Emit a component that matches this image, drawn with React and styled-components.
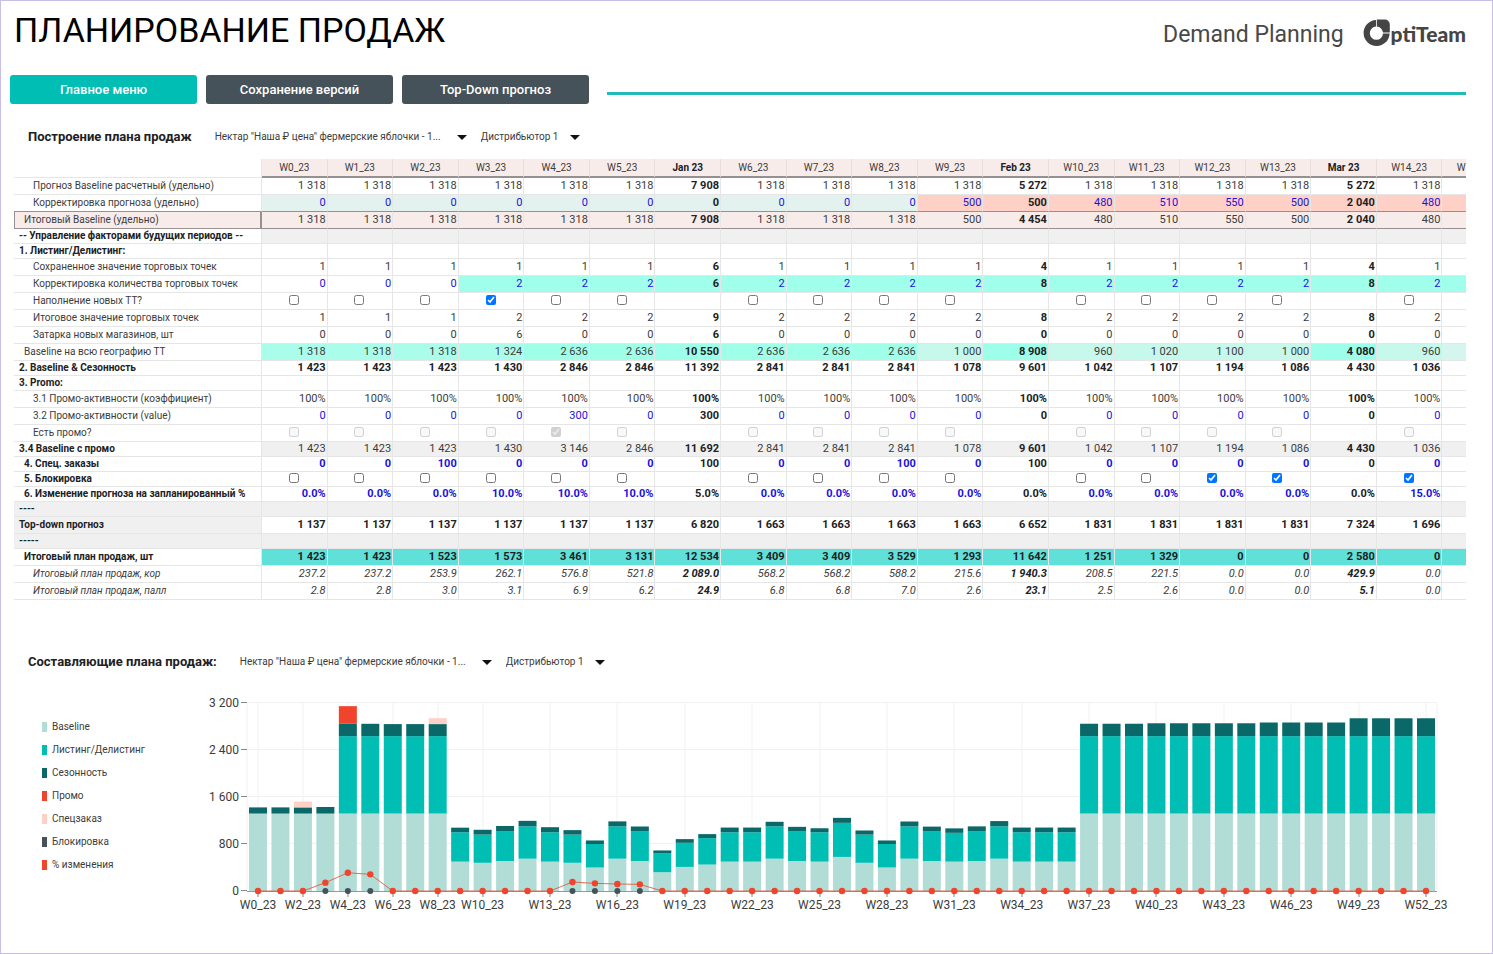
import React from "react";
import styled, { createGlobalStyle, css } from "styled-components";

const color = {
  teal: "#00beb4",
  slate: "#455259",
  ink: "#202124",
  text: "#3c3c3c",
  blue: "#1a12dc",
  line: "#e6e6e6",
  strong: "#969090",
  pink: "#f8eceb",
  grey: "#f0f0f0",
  mint: "#a0ffea",
  salmon: "#ffd0c6",
  red: "#f0442c",
  pale: "#b2dcd6",
  deep: "#0a6868",
};

const GlobalStyle = createGlobalStyle`
  *, *::before, *::after { box-sizing: border-box; }
  body {
    margin: 0;
    background: #fff;
    color: ${color.text};
    font-family: Roboto, "Liberation Sans", sans-serif;
  }
`;

const Page = styled.main`
  min-height: 100vh;
  padding: 0 26px 24px 9px;
  border: 1px solid #c8bfe8;
`;

const Header = styled.header`
  display: flex;
  align-items: baseline;
  gap: 19px;
  height: 74px;
  padding: 9px 0 0 4px;
`;

const Title = styled.h1`
  flex: 1;
  margin: 0;
  font-size: 34px;
  font-weight: 400;
  line-height: 40px;
  color: #000;
`;

const Product = styled.span`
  font-size: 23px;
  line-height: 32px;
  color: #484848;
`;

const Brand = styled.div`
  display: flex;
  align-items: baseline;
  color: #454545;
`;

const BrandName = styled.span`
  font-family: Lato, "Open Sans", sans-serif;
  font-size: 21px;
  font-weight: 900;
  line-height: 30px;
`;

const BrandMark = styled.svg`
  align-self: flex-start;
  flex: none;
`;

const Nav = styled.nav`
  display: flex;
  align-items: center;
  gap: 9px;
`;

const NavButton = styled.button`
  width: 187px;
  height: 29px;
  padding: 0;
  border: 0;
  border-radius: 3px;
  background: ${(p) => (p.$active ? color.teal : color.slate)};
  color: #fff;
  font: 500 13px/28px Roboto, sans-serif;
`;

const NavRule = styled.hr`
  flex: 1;
  height: 3px;
  margin: 8px 0 0 9px;
  border: 0;
  background: #22b9bb;
`;

const SectionHead = styled.div`
  display: flex;
  align-items: center;
  gap: 23px;
  height: 24px;
  margin: ${(p) => p.$top}px 0 0 18px;
`;

const SectionTitle = styled.h2`
  margin: 0;
  font-size: 13px;
  font-weight: 700;
  line-height: 24px;
  color: ${color.ink};
`;

const Filters = styled.div`
  display: flex;
  gap: 14px;
`;

const SelectBox = styled.span`
  position: relative;
  display: inline-flex;
  align-items: center;
  width: ${(p) => p.$width}px;
`;

const Select = styled.select`
  appearance: none;
  width: 100%;
  margin: 0;
  padding: 0 19px 0 0;
  border: 0;
  background: none;
  color: ${color.text};
  font: 10px/24px Roboto, sans-serif;
`;

const Caret = styled.svg`
  position: absolute;
  right: 0;
  pointer-events: none;
`;

const TableScroll = styled.div`
  margin: 10px 0 0 4px;
  overflow: hidden;
`;

const Table = styled.table`
  width: calc(100% + 42px);
  table-layout: fixed;
  border-collapse: separate;
  border-spacing: 0;
  font-size: 11px;
`;

const LabelCol = styled.col`
  width: 248px;
`;

const cellBox = css`
  padding: 0;
  border: solid ${color.line};
  border-width: 0 1px 1px 0;
  white-space: nowrap;
  overflow: hidden;
`;

const ColumnHead = styled.th`
  ${cellBox}
  height: 19px;
  line-height: 17px;
  font-size: 10px;
  background: ${color.pink};
  border-right-color: #e9dedd;
  border-bottom: 2px solid ${color.strong};
  font-weight: ${(p) => (p.$month ? 700 : 400)};
  color: ${(p) => (p.$month ? color.ink : color.text)};
`;

const CornerCell = styled.td`
  ${cellBox}
`;

const Row = styled.tr`
  height: ${(p) => (p.$short ? 15 : 17)}px;
  line-height: ${(p) => (p.$short ? 14 : 16)}px;
  font-style: ${(p) => (p.$italic ? "italic" : "normal")};
`;

const indents = [5, 10, 19];

const RowHead = styled.th`
  ${cellBox}
  padding-left: ${(p) => indents[p.$level]}px;
  font-size: 10px;
  background: ${(p) => p.$bg || "#fff"};
  text-align: left;
  font-weight: ${(p) => (p.$bold ? 700 : 400)};
  color: ${(p) => (p.$bold ? color.ink : color.text)};
  ${(p) =>
    p.$framed &&
    css`
      padding-left: 9px;
      border-color: ${color.strong};
      border-width: 0 2px 1px 1px;
    `}
  ${(p) => p.$edge && css`border-bottom-color: ${color.strong};`}
`;

const Cell = styled.td`
  ${cellBox}
  padding-right: 1px;
  text-align: ${(p) => (p.$center ? "center" : "right")};
  background: ${(p) => p.$bg || "#fff"};
  font-weight: ${(p) => (p.$bold ? 700 : 400)};
  color: ${(p) => (p.$blue ? color.blue : p.$bold ? color.ink : color.text)};
  ${(p) => p.$edge && css`border-bottom-color: ${color.strong};`}
`;

const Check = styled.input`
  display: block;
  width: 10px;
  height: 10px;
  margin: 0 auto 2px;
`;

const ChartArea = styled.div`
  display: flex;
  align-items: flex-start;
  margin-top: 19px;
`;

const Legend = styled.ul`
  flex: none;
  width: 195px;
  margin: 22px 0 0;
  padding: 0 0 0 32px;
  list-style: none;
`;

const LegendItem = styled.li`
  display: flex;
  align-items: center;
  gap: 5px;
  font-size: 10px;
  line-height: 23px;

  &::before {
    content: "";
    width: 5px;
    height: 10px;
    background: ${(p) => p.$color};
  }
`;

const Chart = styled.svg`
  flex: 1;
  min-width: 0;
  display: block;
  font-size: 12px;
  fill: ${color.text};
`;

const columns = [
  "W0_23", "W1_23", "W2_23", "W3_23", "W4_23", "W5_23", "Jan 23",
  "W6_23", "W7_23", "W8_23", "W9_23", "Feb 23",
  "W10_23", "W11_23", "W12_23", "W13_23", "Mar 23",
  "W14_23", "W15_23",
];
const isMonth = (i) => !columns[i].startsWith("W");

const format = (v) => String(v).replace(/\B(?=(\d{3})+(?!\d))/, "\u00a0");
const list = (text) => text.split(" ").map((v) => (v.includes(".") || v.includes("%") ? v : format(v)));

const baselineTint = (i) => {
  if (isMonth(i)) return "#9dffe9";
  if (i < 4) return "#abfdeb";
  if (i < 10) return "#a0ffe9";
  return i === 18 ? "#d4f6ee" : "#c6f8ec";
};

const rows = [
  { label: "Прогноз Baseline расчетный (удельно)", level: 2, values: list("1318 1318 1318 1318 1318 1318 7908 1318 1318 1318 1318 5272 1318 1318 1318 1318 5272 1318") },
  { label: "Корректировка прогноза (удельно)", level: 2, blue: true, edge: true, tint: (i) => (i < 10 ? "#e3f2ef" : color.salmon), values: list("0 0 0 0 0 0 0 0 0 0 500 500 480 510 550 500 2040 480") },
  { label: "Итоговый Baseline (удельно)", level: 1, framed: true, edge: true, headTint: color.pink, tint: () => color.pink, values: list("1318 1318 1318 1318 1318 1318 7908 1318 1318 1318 500 4454 480 510 550 500 2040 480") },
  { label: "-- Управление факторами будущих периодов --", level: 0, short: true, boldLabel: true, tint: () => color.grey },
  { label: "1. Листинг/Делистинг:", level: 0, short: true, boldLabel: true },
  { label: "Сохраненное значение торговых точек", level: 2, values: list("1 1 1 1 1 1 6 1 1 1 1 4 1 1 1 1 4 1") },
  { label: "Корректировка количества торговых точек", level: 2, blue: true, tint: (i) => (i > 2 ? color.mint : "#fff"), values: list("0 0 0 2 2 2 6 2 2 2 2 8 2 2 2 2 8 2") },
  { label: "Наполнение новых ТТ?", level: 2, checks: [3] },
  { label: "Итоговое значение торговых точек", level: 2, values: list("1 1 1 2 2 2 9 2 2 2 2 8 2 2 2 2 8 2") },
  { label: "Затарка новых магазинов, шт", level: 2, values: list("0 0 0 6 0 0 6 0 0 0 0 0 0 0 0 0 0 0") },
  { label: "Baseline на всю географию ТТ", level: 1, tint: baselineTint, values: list("1318 1318 1318 1324 2636 2636 10550 2636 2636 2636 1000 8908 960 1020 1100 1000 4080 960") },
  { label: "2. Baseline & Сезонность", level: 0, short: true, boldLabel: true, bold: true, values: list("1423 1423 1423 1430 2846 2846 11392 2841 2841 2841 1078 9601 1042 1107 1194 1086 4430 1036") },
  { label: "3. Promo:", level: 0, short: true, boldLabel: true },
  { label: "3.1 Промо-активности (коэффициент)", level: 2, values: Array(18).fill("100%") },
  { label: "3.2 Промо-активности (value)", level: 2, blue: true, values: list("0 0 0 0 300 0 300 0 0 0 0 0 0 0 0 0 0 0") },
  { label: "Есть промо?", level: 2, checks: [4], disabled: true },
  { label: "3.4 Baseline с промо", level: 0, short: true, boldLabel: true, tint: () => color.grey, values: list("1423 1423 1423 1430 3146 2846 11692 2841 2841 2841 1078 9601 1042 1107 1194 1086 4430 1036") },
  { label: "4. Спец. заказы", level: 1, short: true, boldLabel: true, bold: true, blue: true, values: list("0 0 100 0 0 0 100 0 0 100 0 100 0 0 0 0 0 0") },
  { label: "5. Блокировка", level: 1, short: true, boldLabel: true, checks: [14, 15, 17] },
  { label: "6. Изменение прогноза на запланированный %", level: 1, short: true, boldLabel: true, bold: true, blue: true, values: list("0.0% 0.0% 0.0% 10.0% 10.0% 10.0% 5.0% 0.0% 0.0% 0.0% 0.0% 0.0% 0.0% 0.0% 0.0% 0.0% 0.0% 15.0%") },
  { label: "----", level: 0, short: true, boldLabel: true, headTint: color.grey, tint: () => color.grey },
  { label: "Top-down прогноз", level: 0, boldLabel: true, bold: true, headTint: color.grey, values: list("1137 1137 1137 1137 1137 1137 6820 1663 1663 1663 1663 6652 1831 1831 1831 1831 7324 1696") },
  { label: "-----", level: 0, short: true, boldLabel: true, headTint: color.grey, tint: () => color.grey },
  { label: "Итоговый план продаж, шт", level: 1, boldLabel: true, bold: true, tint: () => "#5fe0d8", values: list("1423 1423 1523 1573 3461 3131 12534 3409 3409 3529 1293 11642 1251 1329 0 0 2580 0") },
  { label: "Итоговый план продаж, кор", level: 2, italic: true, values: ["237.2", "237.2", "253.9", "262.1", "576.8", "521.8", "2\u00a0089.0", "568.2", "568.2", "588.2", "215.6", "1\u00a0940.3", "208.5", "221.5", "0.0", "0.0", "429.9", "0.0"] },
  { label: "Итоговый план продаж, палл", level: 2, italic: true, values: list("2.8 2.8 3.0 3.1 6.9 6.2 24.9 6.8 6.8 7.0 2.6 23.1 2.5 2.6 0.0 0.0 5.1 0.0") },
];

const legend = [
  ["Baseline", color.pale],
  ["Листинг/Делистинг", color.teal],
  ["Сезонность", color.deep],
  ["Промо", color.red],
  ["Спецзаказ", color.salmon],
  ["Блокировка", color.slate],
  ["% изменения", color.red],
];

/* Cumulative tops per week: baseline, listing, season. */
const weeks = [
  [1318, 1318, 1423], [1318, 1318, 1423], [1318, 1318, 1423], [1318, 1318, 1430],
  [1318, 2636, 2846], [1318, 2636, 2846], [1318, 2636, 2841], [1318, 2636, 2841], [1318, 2636, 2841],
  [500, 1000, 1078], [480, 960, 1042], [510, 1020, 1107], [550, 1100, 1194], [500, 1000, 1086],
  [480, 960, 1036], [400, 800, 860], [550, 1100, 1185], [510, 1020, 1098], [320, 640, 690],
  [410, 820, 883], [450, 900, 968], [500, 1000, 1080], [500, 1000, 1080], [550, 1100, 1178],
  [510, 1020, 1092], [500, 1000, 1068], [580, 1160, 1245], [480, 960, 1030], [400, 800, 860],
  [550, 1100, 1183], [510, 1020, 1096], [500, 990, 1066], [510, 1020, 1100], [550, 1100, 1190],
  [500, 1000, 1080], [500, 1000, 1080], [500, 1000, 1080],
  ...Array(3).fill([1318, 2636, 2847]),
  ...Array(5).fill([1318, 2636, 2855]),
  ...Array(4).fill([1318, 2636, 2868]),
  ...Array(4).fill([1318, 2636, 2940]),
];
const extras = { 2: [100, color.salmon], 4: [300, color.red], 8: [100, color.salmon] };
const change = { 3: 142, 4: 311, 5: 283, 14: 153, 15: 130, 16: 119, 17: 113 };
const ticks = [0, 2, 4, 6, 8, 10, 13, 16, 19, 22, 25, 28, 31, 34, 37, 40, 43, 46, 49, 52];

const plot = { left: 42, right: 1232, top: 10, bottom: 198 };
const xOf = (i) => 53 + (i * 1168) / 52;
const yOf = (v) => plot.bottom - (v * (plot.bottom - plot.top)) / 3200;

function PlanChart() {
  const path = weeks.map((_, i) => `${xOf(i)},${yOf(change[i] || 0)}`).join(" ");
  return (
    <Chart viewBox="0 0 1261 224" role="img" aria-label="Составляющие плана продаж">
      <g stroke="#f1f1f1" fill="none">
        {[800, 1600, 2400, 3200].map((v) => (
          <path key={v} d={`M${plot.left} ${Math.round(yOf(v)) - 0.5}H${plot.right}`} />
        ))}
        {ticks.map((i) => (
          <path key={i} d={`M${Math.round(xOf(i))} ${plot.top}V${plot.bottom}`} />
        ))}
        <path d={`M${plot.left} ${plot.top}V${plot.bottom}M${plot.right} ${plot.top}V${plot.bottom}`} />
      </g>
      {[0, 800, 1600, 2400, 3200].map((v) => (
        <g key={v}>
          <path d={`M${plot.left - 6} ${Math.round(yOf(v)) - 0.5}h6`} stroke="#888" />
          <text x={plot.left - 8} y={Math.round(yOf(v)) + 4} textAnchor="end">{format(v)}</text>
        </g>
      ))}
      {weeks.map(([base, listing, season], i) => {
        const x = xOf(i) - 9;
        const bar = (from, to, fill) => (
          <rect x={x} y={yOf(to)} width="18" height={yOf(from) - yOf(to)} fill={fill} />
        );
        return (
          <g key={i}>
            {bar(0, base, color.pale)}
            {listing > base && bar(base, listing, color.teal)}
            {bar(listing, season, color.deep)}
            {extras[i] && bar(season, season + extras[i][0], extras[i][1])}
          </g>
        );
      })}
      <path d={`M${plot.left} ${plot.bottom + 0.5}H${plot.right}`} stroke="#8f9b9b" />
      {ticks.map((i) => (
        <g key={i}>
          <path d={`M${Math.round(xOf(i))} ${plot.bottom}v6`} stroke="#888" />
          <text x={xOf(i)} y="216" textAnchor="middle">{`W${i}_23`}</text>
        </g>
      ))}
      <polyline points={path} fill="none" stroke="#e2553f" strokeOpacity="0.85" />
      {weeks.map((_, i) => (
        <g key={i}>
          {change[i] && <circle cx={xOf(i)} cy={yOf(0)} r="3" fill={color.slate} />}
          <circle cx={xOf(i)} cy={yOf(change[i] || 0)} r="3.2" fill={color.red} />
        </g>
      ))}
    </Chart>
  );
}

function Dropdown({ label, value, width }) {
  return (
    <SelectBox $width={width}>
      <Select aria-label={label} defaultValue={value}>
        <option value={value}>{value}</option>
      </Select>
      <Caret width="10" height="5" viewBox="0 0 10 5" aria-hidden="true">
        <path d="M0 0h10L5 5z" fill="#111" />
      </Caret>
    </SelectBox>
  );
}

function Section({ title, top }) {
  return (
    <SectionHead $top={top}>
      <SectionTitle>{title}</SectionTitle>
      <Filters>
        <Dropdown label="Продукт" width={252} value={'Нектар "Наша ₽ цена" фермерские яблочки - 1...'} />
        <Dropdown label="Дистрибьютор" width={99} value="Дистрибьютор 1" />
      </Filters>
    </SectionHead>
  );
}

function PlanRow({ row }) {
  return (
    <Row $short={row.short} $italic={row.italic}>
      <RowHead scope="row" $level={row.level} $bold={row.boldLabel} $bg={row.headTint} $framed={row.framed} $edge={row.edge}>
        {row.label}
      </RowHead>
      {columns.map((name, i) => {
        const bg = row.tint && row.tint(i);
        const month = isMonth(i);
        if (row.checks) {
          return (
            <Cell key={name} $center>
              {!month && i < 18 && (
                <Check
                  type="checkbox"
                  aria-label={`${row.label} ${name}`}
                  defaultChecked={row.checks.includes(i)}
                  disabled={row.disabled}
                />
              )}
            </Cell>
          );
        }
        return (
          <Cell key={name} $bg={bg} $edge={row.edge} $bold={row.bold || month} $blue={row.blue && !month}>
            {row.values && row.values[i]}
          </Cell>
        );
      })}
    </Row>
  );
}

export default function App() {
  return (
    <>
      <GlobalStyle />
      <Page>
        <Header>
          <Title>ПЛАНИРОВАНИЕ ПРОДАЖ</Title>
          <Product>Demand Planning</Product>
          <Brand>
            <BrandMark width="28" height="28" viewBox="0 0 28 28" aria-hidden="true">
              <path d="M13 1A13 13 0 1 0 26.6 14.4H20A6.6 6.6 0 1 1 13 7.6Z" fill="currentColor" />
              <path d="M13.8 .6h8a5 5 0 0 1 5 5v8H20A6.6 6.6 0 0 0 13.8 7.6Z" fill="currentColor" />
            </BrandMark>
            <BrandName>ptiTeam</BrandName>
          </Brand>
        </Header>
        <Nav>
          <NavButton type="button" $active>Главное меню</NavButton>
          <NavButton type="button">Сохранение версий</NavButton>
          <NavButton type="button">Top-Down прогноз</NavButton>
          <NavRule />
        </Nav>
        <Section title="Построение плана продаж" top={21} />
        <TableScroll>
          <Table>
            <colgroup>
              <LabelCol />
              {columns.map((name) => <col key={name} />)}
            </colgroup>
            <thead>
              <tr>
                <CornerCell />
                {columns.map((name, i) => (
                  <ColumnHead key={name} scope="col" $month={isMonth(i)}>{name}</ColumnHead>
                ))}
              </tr>
            </thead>
            <tbody>
              {rows.map((row) => <PlanRow key={row.label} row={row} />)}
            </tbody>
          </Table>
        </TableScroll>
        <Section title="Составляющие плана продаж:" top={50} />
        <ChartArea>
          <Legend>
            {legend.map(([name, fill]) => (
              <LegendItem key={name} $color={fill}>{name}</LegendItem>
            ))}
          </Legend>
          <PlanChart />
        </ChartArea>
      </Page>
    </>
  );
}
